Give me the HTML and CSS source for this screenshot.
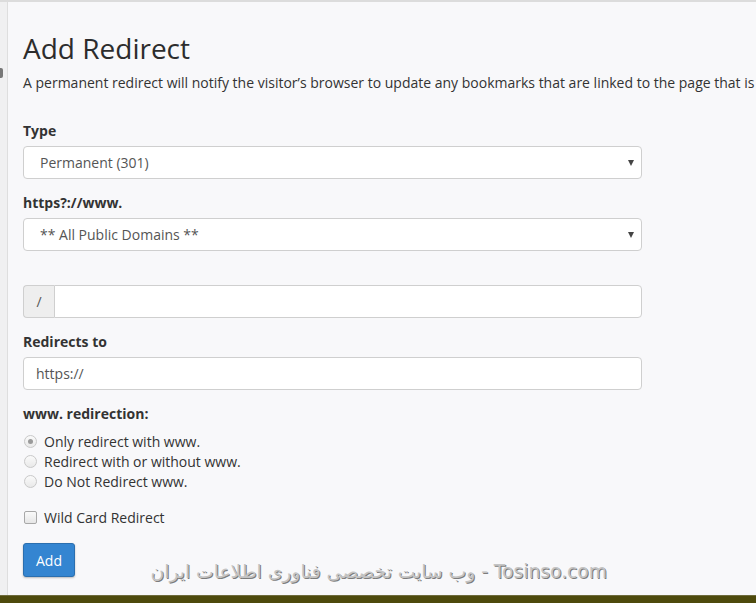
FILE: index.html
```html
<!DOCTYPE html>
<html lang="en">
<head>
<meta charset="utf-8">
<title>Add Redirect</title>
<link rel="stylesheet" href="styles.css">
</head>
<body>
<div class="frame">
  <aside class="side"><span class="side-icon"></span></aside>
  <main class="main">
    <h1 class="title">Add Redirect</h1>
    <p class="desc">A permanent redirect will notify the visitor’s browser to update any bookmarks that are linked to the page that is being redirected.</p>
    <form class="form">
      <div class="group">
        <label class="label">Type</label>
        <div class="select-wrap">
          <select class="control select"><option>Permanent (301)</option></select>
        </div>
      </div>
      <div class="group">
        <label class="label">https?://www.</label>
        <div class="select-wrap">
          <select class="control select"><option>** All Public Domains **</option></select>
        </div>
      </div>
      <div class="group group-spaced">
        <div class="input-group">
          <span class="addon">/</span>
          <input class="control ig-input" type="text" value="">
        </div>
      </div>
      <div class="group">
        <label class="label">Redirects to</label>
        <input class="control input" type="text" value="https://">
      </div>
      <div class="group">
        <label class="label">www. redirection:</label>
        <div class="radios">
          <label class="check-row"><span class="radio checked"></span>Only redirect with www.</label>
          <label class="check-row"><span class="radio"></span>Redirect with or without www.</label>
          <label class="check-row"><span class="radio"></span>Do Not Redirect www.</label>
        </div>
      </div>
      <div class="group group-check">
        <label class="check-row"><span class="checkbox"></span>Wild Card Redirect</label>
      </div>
      <div class="actions">
        <button type="button" class="btn">Add</button>
      </div>
    </form>
  </main>
</div>
<div class="watermark" dir="rtl">Tosinso.com - وب سایت تخصصی فناوری اطلاعات ایران</div>
<div class="taskbar"></div>
</body>
</html>
```
FILE: styles.css
```css
html, body {
  margin: 0;
  padding: 0;
  height: 100%;
  overflow: hidden;
}
body {
  background: #f8f8fa;
  font-family: "Open Sans", "Liberation Sans", sans-serif;
  color: #333;
  font-size: 14px;
  position: relative;
}
.frame {
  display: flex;
  height: 595px;
  border-top: 2px solid #dcdcdc;
  box-sizing: border-box;
}
.side {
  width: 7px;
  flex: none;
  background: #f0f0f1;
  border-right: 1px solid #dedede;
  position: relative;
}
.side-icon {
  position: absolute;
  left: 0;
  top: 66px;
  width: 3px;
  height: 10px;
  background: #777;
  border-radius: 0 2px 2px 0;
}
.main {
  flex: 1;
  padding-left: 15px;
  min-width: 0;
  overflow: hidden;
}
.title {
  margin: 28px 0 0;
  font-size: 28px;
  font-weight: 400;
  line-height: 36px;
  color: #2d2d2d;
}
.desc {
  margin: 7px 0 0;
  line-height: 20px;
  white-space: nowrap;
  color: #333;
}
.form {
  width: 619px;
  margin-top: 28px;
}
.group {
  margin-bottom: 14px;
}
.group-spaced {
  padding-top: 20px;
}
.label {
  display: block;
  font-weight: 700;
  line-height: 20px;
  margin-bottom: 5px;
  color: #333;
}
.control {
  display: block;
  box-sizing: border-box;
  width: 100%;
  height: 33px;
  border: 1px solid #cfcfcf;
  border-radius: 4px;
  background: #fff;
  font-family: inherit;
  font-size: 14px;
  color: #555;
  margin: 0;
  outline: none;
}
.select-wrap {
  position: relative;
}
.select-wrap::after {
  content: "";
  position: absolute;
  right: 8px;
  top: 14px;
  border-left: 3px solid transparent;
  border-right: 3px solid transparent;
  border-top: 6px solid #444;
  pointer-events: none;
}
.select {
  appearance: none;
  -webkit-appearance: none;
  padding: 0 16px;
}
.input {
  padding: 0 12px;
}
.input-group {
  display: flex;
}
.addon {
  flex: none;
  box-sizing: border-box;
  width: 31px;
  height: 33px;
  border: 1px solid #cfcfcf;
  border-right: 0;
  border-radius: 4px 0 0 4px;
  background: #eeeeee;
  color: #555;
  display: flex;
  align-items: center;
  justify-content: center;
}
.ig-input {
  flex: 1;
  border-radius: 0 4px 4px 0;
  padding: 0 12px;
}
.radios {
  padding-top: 2px;
}
.check-row {
  display: flex;
  align-items: center;
  height: 20px;
  color: #333;
  font-weight: 400;
}
.radio {
  box-sizing: border-box;
  width: 13px;
  height: 13px;
  margin: 0 7px 0 1px;
  border-radius: 50%;
  border: 1px solid #c9c9c9;
  background: linear-gradient(#fafafa, #e9e9e9);
  position: relative;
}
.radio.checked::after {
  content: "";
  position: absolute;
  left: 3px;
  top: 3px;
  width: 5px;
  height: 5px;
  border-radius: 50%;
  background: #9a9a9a;
}
.checkbox {
  box-sizing: border-box;
  width: 13px;
  height: 13px;
  margin: 0 7px 0 1px;
  border: 1px solid #a8a8a8;
  border-radius: 2px;
  background: linear-gradient(#fafafa, #e6e6e6);
}
.group-check {
  margin-top: 16px;
  margin-bottom: 16px;
}
.btn {
  height: 34px;
  padding: 0 12px;
  border: 1px solid #2b6faf;
  border-radius: 3px;
  background: #3485d1;
  color: #fff;
  font-family: inherit;
  font-size: 14px;
  box-shadow: 0 1px 2px rgba(0,0,0,0.25);
}
.watermark {
  position: absolute;
  left: 140px;
  top: 560px;
  width: 467px;
  text-align: right;
  font-family: "DejaVu Sans", "Liberation Sans", sans-serif;
  font-size: 18.7px;
  line-height: 24px;
  color: #c4c4c4;
  text-shadow: 1px 1px 0 #7c7c7c;
  white-space: nowrap;
}
.taskbar {
  position: absolute;
  left: 0;
  right: 0;
  bottom: 0;
  height: 8px;
  background: #4e4a0c;
  border-top: 1px solid #6e6b3c;
  box-sizing: border-box;
}
```
